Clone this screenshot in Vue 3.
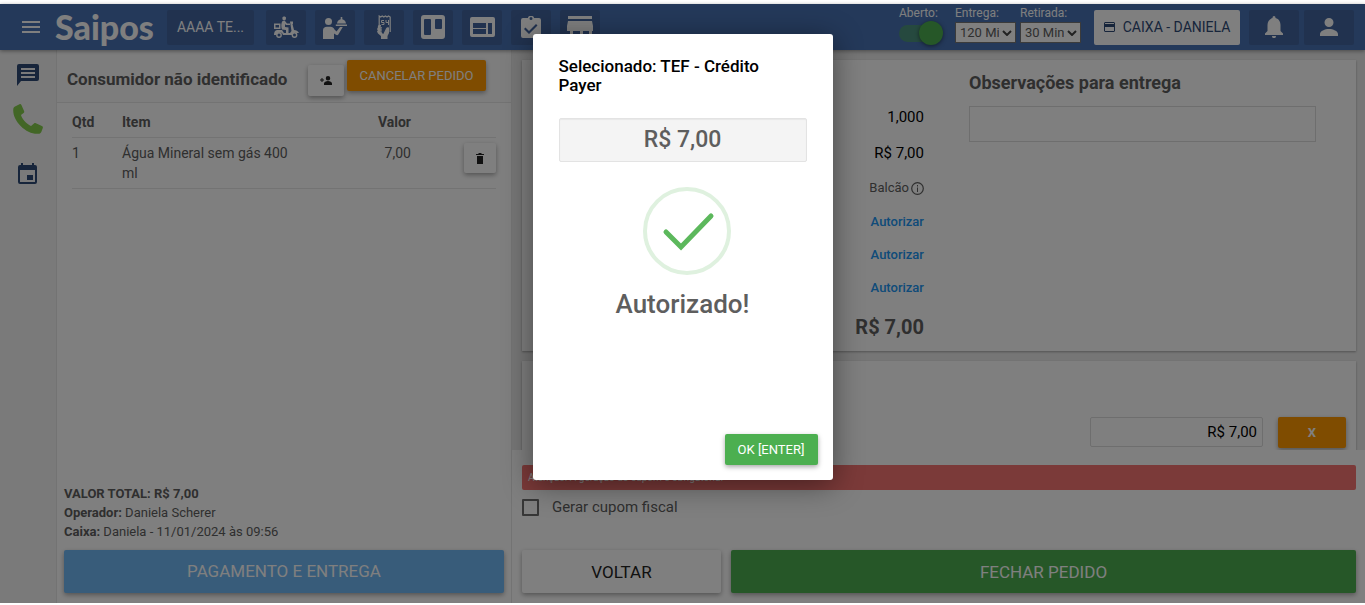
<script setup>
import { ref } from 'vue'

const entrega = ref('120 Min')
const retirada = ref('30 Min')
const aberto = ref(true)
const cupom = ref(false)
const observacoes = ref('')
const valorPago = ref('R$ 7,00')
const autorizacoes = ['Desconto', 'Acréscimo', 'Taxa de serviço']
</script>

<template>
  <div class="page">
    <header class="topbar">
      <button class="plain menu" aria-label="Menu">
        <svg width="18" height="12" viewBox="0 0 18 12"><path fill="currentColor" d="M0 0h18v2H0zM0 5h18v2H0zM0 10h18v2H0z" /></svg>
      </button>
      <span class="logo">Saipos</span>
      <button class="nav store">AAAA TE...</button>
      <nav class="shortcuts">
        <button class="nav" aria-label="Entregas">
          <svg width="25" height="22" viewBox="0 0 25 22">
            <g fill="currentColor">
              <path d="M8.500 1.500C9 0 12 0 12 2c0 2-1 2.500-2 2.500S8 3.500 8.500 1.500z" />
              <path fill-rule="evenodd" d="M0 7.500h6.500V13H0zM1.500 9v2.500H5V9z" />
              <path d="M8.500 5H11l2 2.500h3V9h-4l-1-1v3l3.500.5V17H12v-3l-4-.5C7 11 7 7 8.500 5z" />
              <path d="M16 5.500h3V8h-.5l1.500 6c2 0 4 1 5 3h-2.500l-1-.5-3 2.500H9l-1-2-2.500-1L2 19H0c0-3 1-4.500 3-5h5l2 3h6l1.500-2z" />
            </g>
            <g fill="#42659f" stroke="currentColor" stroke-width="1.400"><circle cx="5" cy="19" r="2.200" /><circle cx="20.500" cy="19" r="2.200" /></g>
          </svg>
        </button>
        <button class="nav" aria-label="Garçom">
          <svg width="24" height="23" viewBox="0 0 24 23">
            <g fill="currentColor"><circle cx="5.500" cy="5.500" r="3.500" /><path d="M0 23v-8.500C0 12 1.500 10.800 4 10.800h3.500c2 0 3 1 4 2.700l2 2L17 11h2.800l-4.500 7.500c-.6.800-1.500.9-2.300.3L11 17.500V23zM12.800 8.500H24v1.600H12.800zM14 7.500C14.300 4.700 16 3.500 17.700 3.200V1h1.600v2.200C21 3.500 22.700 4.700 23 7.500z" /></g>
          </svg>
        </button>
        <button class="nav" aria-label="Senhas">
          <svg width="15" height="24" viewBox="0 0 15 24">
            <path d="M2.200 11V1l1.500 1 1.500-1 1.600 1 1.600-1L10 2l1.500-1L13.200 2v15" fill="none" stroke="currentColor" stroke-width="1.200" />
            <path d="M1 10.500l3-.8v1.800l-1.500.7L4.800 12v1.500l-2 .5 2 .2v1.500l-2 .3 2 .4V18l1.500 1L9 13.500c.7-1.300 2-1.500 3-.8V18l-1.500 3v3H4v-3L1 18.500l-1-2 .8-1-.8-1.500.8-1.200z" fill="currentColor" />
            <path d="M7 5.500H4.500v2H7v2H4.500M9 5v2.500h2.500M11.500 5v5" fill="none" stroke="currentColor" />
          </svg>
        </button>
        <button class="nav" aria-label="Quadro">
          <svg width="24" height="24" viewBox="0 0 24 24"><path fill="currentColor" fill-rule="evenodd" d="M3 0h18a3 3 0 0 1 3 3v18a3 3 0 0 1-3 3H3a3 3 0 0 1-3-3V3a3 3 0 0 1 3-3zm1 4a1 1 0 0 0-1 1v14a1 1 0 0 0 1 1h5a1 1 0 0 0 1-1V5a1 1 0 0 0-1-1zm11 0a1 1 0 0 0-1 1v8a1 1 0 0 0 1 1h5a1 1 0 0 0 1-1V5a1 1 0 0 0-1-1z" /></svg>
        </button>
        <button class="nav" aria-label="Salão">
          <svg width="25" height="20" viewBox="0 0 25 20"><path fill="currentColor" fill-rule="evenodd" d="M2 0h21a2 2 0 0 1 2 2v16a2 2 0 0 1-2 2H2a2 2 0 0 1-2-2V2a2 2 0 0 1 2-2zm1 6v5h13V6zm0 6v5h13v-5zM18 6v11h4V6z" /></svg>
        </button>
        <button class="nav" aria-label="Pedidos">
          <svg width="20" height="22" viewBox="0 0 20 22"><path fill="currentColor" fill-rule="evenodd" d="M2 2h5c0-3 6-3 6 0h5a2 2 0 0 1 2 2v16a2 2 0 0 1-2 2H2a2 2 0 0 1-2-2V4a2 2 0 0 1 2-2zm8-1a1 1 0 0 0 0 3 1 1 0 0 0 0-3zM4.500 11.500L3 13l5 5 8.500-8.500L15 8l-7 7z" /></svg>
        </button>
        <button class="nav" aria-label="Loja">
          <svg width="26" height="23" viewBox="0 0 26 23"><path fill="currentColor" fill-rule="evenodd" d="M1 0h24v3H1zM1 5h24l1 5v5h-1v8h-3v-8h-6v8H3v-8H0v-5zm5 10v5h7v-5z" /></svg>
        </button>
      </nav>

      <div class="status">
        <label class="field toggle">
          <span>Aberto:</span>
          <input v-model="aberto" type="checkbox" role="switch" />
        </label>
        <label class="field">
          <span>Entrega:</span>
          <span class="pick">
            <select v-model="entrega"><option>120 Min</option></select>
            <svg width="10" height="6" viewBox="0 0 10 6"><path d="M1 1l4 4 4-4" fill="none" stroke="currentColor" stroke-width="2" /></svg>
          </span>
        </label>
        <label class="field">
          <span>Retirada:</span>
          <span class="pick">
            <select v-model="retirada"><option>30 Min</option></select>
            <svg width="10" height="6" viewBox="0 0 10 6"><path d="M1 1l4 4 4-4" fill="none" stroke="currentColor" stroke-width="2" /></svg>
          </span>
        </label>
      </div>
      <button class="cashier">
        <svg width="11" height="10" viewBox="0 0 11 10"><path fill="currentColor" fill-rule="evenodd" d="M1 0h9l1 1v8l-1 1H1L0 9V1zm0 1v1h9V1zm0 4v4h9V5z" /></svg>
        CAIXA - DANIELA
      </button>
      <button class="nav wide" aria-label="Notificações">
        <svg width="18" height="22" viewBox="0 0 18 22"><path fill="currentColor" d="M7 20h4c0 3-4 3-4 0zM9 0c1 0 1.500.7 1.500 2C14 3 15.500 6 15.500 9v6l2.500 2.500V19H0v-1.500L2.500 15V9c0-3 1.500-6 5-7C7.500.7 8 0 9 0z" /></svg>
      </button>
      <button class="nav wide" aria-label="Conta">
        <svg width="18" height="18" viewBox="0 0 18 18"><path fill="currentColor" d="M9 0a4.500 4.500 0 0 1 0 9 4.500 4.500 0 0 1 0-9zm0 11c4 0 9 2 9 5v2H0v-2c0-3 5-5 9-5z" /></svg>
      </button>
    </header>

    <div class="body">
      <aside class="side">
        <button class="plain" aria-label="Mensagens">
          <svg width="22" height="22" viewBox="0 0 22 22"><path fill="#2e4a76" fill-rule="evenodd" d="M2 0h18a2 2 0 0 1 2 2v13a2 2 0 0 1-2 2H4l-4 5V2a2 2 0 0 1 2-2zm2 4v2h14V4zm0 4v2h14V8zm0 4v2h14v-2z" /></svg>
        </button>
        <button class="plain" aria-label="Telefone">
          <svg width="30" height="30" viewBox="0 0 30 30"><path fill="#84cc4c" d="M2 2.500L6.500.2c.8-.4 1.500-.1 1.900.7l2.700 6c.3.800.2 1.400-.5 2L8 11c1 4 5 8.500 10 11l3-2.500c.6-.5 1.200-.6 1.900-.2l6 2.800c.9.4 1.200 1 .9 1.900l-1.500 4c-.3.900-1 1.500-2 1.700C14 31.500-1 17 .3 5c.1-1.200.7-2 1.700-2.500z" /></svg>
        </button>
        <button class="plain" aria-label="Agenda">
          <svg width="20" height="21" viewBox="0 0 20 21"><path fill="#2e4a76" fill-rule="evenodd" d="M3 0h2v2h9V0h2v2h1a2 2 0 0 1 2 2v15a2 2 0 0 1-2 2H2a2 2 0 0 1-2-2V4a2 2 0 0 1 2-2h1zM2 7v12h15V7zm7 5h6v5H9z" /></svg>
        </button>
      </aside>

      <section class="order">
        <div class="customer">
          <h2>Consumidor não identificado</h2>
          <button class="btn white add" aria-label="Adicionar consumidor">
            <svg width="12" height="9" viewBox="0 0 12 9"><path fill="currentColor" d="M8 0a2.200 2.200 0 0 1 0 4.500A2.200 2.200 0 0 1 8 0zm0 5c2 0 4 1.200 4 2.500V9H4V7.500C4 6.200 6 5 8 5zM1.500 2h1v1.500H4v1H2.500V6h-1V4.500H0v-1h1.500z" /></svg>
          </button>
          <button class="btn orange cancel">CANCELAR PEDIDO</button>
        </div>
        <table class="items">
          <thead>
            <tr><th class="qty">Qtd</th><th>Item</th><th class="value">Valor</th><th class="act"></th></tr>
          </thead>
          <tbody>
            <tr>
              <td>1</td>
              <td>Água Mineral sem gás 400 ml</td>
              <td class="value">7,00</td>
              <td class="act">
                <button class="btn white trash" aria-label="Excluir item">
                  <svg width="8" height="11" viewBox="0 0 8 11"><path fill="currentColor" d="M2.500 0h3v1H8v1H0V1h2.500zM1 3h6v8H1z" /></svg>
                </button>
              </td>
            </tr>
          </tbody>
        </table>
        <div class="summary">
          <p><b>VALOR TOTAL: R$ 7,00</b></p>
          <p><b>Operador:</b> Daniela Scherer</p>
          <p><b>Caixa:</b> Daniela - 11/01/2024 às 09:56</p>
          <button class="btn big blue">PAGAMENTO E ENTREGA</button>
        </div>
      </section>

      <main class="checkout">
        <div class="scroll">
          <div class="card details">
            <div class="values">
              <span class="num">1,000</span>
              <span class="num">R$ 7,00</span>
              <span class="origin">Balcão
                <svg width="13" height="13" viewBox="0 0 13 13"><circle cx="6.500" cy="6.500" r="5.800" fill="none" stroke="currentColor" stroke-width="1.200" /><path fill="currentColor" d="M6 3h1v1.500H6zM6 5.500h1V10H6z" /></svg>
              </span>
              <a v-for="nome in autorizacoes" :key="nome" href="#">Autorizar</a>
              <strong>R$ 7,00</strong>
            </div>
            <div class="notes">
              <label for="obs">Observações para entrega</label>
              <input id="obs" v-model="observacoes" type="text" />
            </div>
          </div>
          <div class="card payment">
            <input v-model="valorPago" type="text" aria-label="Valor pago" />
            <button class="btn orange remove">X</button>
          </div>
        </div>
        <div class="finish">
          <p class="alert">Atenção: A geração do cupom é obrigatória.</p>
          <label class="coupon"><input v-model="cupom" type="checkbox" />Gerar cupom fiscal</label>
          <div class="actions">
            <button class="btn big white back">VOLTAR</button>
            <button class="btn big green">FECHAR PEDIDO</button>
          </div>
        </div>
      </main>
    </div>

    <div class="overlay">
      <div class="modal" role="dialog" aria-modal="true">
        <h3>Selecionado: TEF - Crédito Payer</h3>
        <div class="amount">R$ 7,00</div>
        <svg class="done" width="88" height="88" viewBox="0 0 88 88">
          <circle cx="44" cy="44" r="42" fill="none" stroke="#dff1df" stroke-width="4" />
          <path d="M23 45l15 15 30-31" fill="none" stroke="#5cb85c" stroke-width="5" stroke-linecap="round" />
        </svg>
        <h4>Autorizado!</h4>
        <button class="btn green ok">OK [ENTER]</button>
      </div>
    </div>
  </div>
</template>

<style>
body {
  background: #fff;
}
</style>

<style scoped>
* {
  box-sizing: border-box;
}
.page {
  position: relative;
  display: flex;
  flex-direction: column;
  min-height: 100vh;
  padding: 4px 0 2px;
  font-family: Roboto, "Liberation Sans", sans-serif;
  font-size: 14px;
  color: #5e5e5e;
}
button,
input,
select {
  font: inherit;
  margin: 0;
}
button {
  border: 0;
  padding: 0;
  cursor: pointer;
}
svg {
  display: block;
  flex: none;
}
h2, h3, h4, p {
  margin: 0;
}
.plain {
  background: none;
}

/* top bar */
.topbar {
  position: relative;
  z-index: 1;
  display: flex;
  align-items: center;
  height: 46px;
  padding: 0 11px 0 22px;
  background: #4872b4;
  color: #fff;
  box-shadow: 0 1px 4px rgba(0, 0, 0, 0.4);
}
.menu {
  color: #fff;
}
.logo {
  width: 99px;
  margin: 0 13px 0 15px;
  font: 900 34px/40px Lato, sans-serif;
  color: #fff;
}
.nav {
  display: flex;
  align-items: center;
  justify-content: center;
  flex: none;
  width: 40px;
  height: 35px;
  border-radius: 2px;
  background: #42659f;
  color: #fff;
}
.store {
  width: 87px;
  margin-right: 12px;
}
.shortcuts {
  display: flex;
  gap: 9px;
}
.wide {
  width: 50px;
  margin-left: 5px;
}
.status {
  display: flex;
  gap: 4px;
  height: 44px;
  margin-left: auto;
}
.field {
  display: flex;
  flex-direction: column;
  width: 61px;
  font-size: 12px;
  line-height: 16px;
}
.toggle {
  width: 52px;
}
.toggle input {
  appearance: none;
  position: relative;
  width: 40px;
  height: 17px;
  margin-top: 4px;
  border-radius: 9px;
  background: #4c937e;
}
.toggle input::after {
  content: "";
  position: absolute;
  top: -4px;
  right: -4px;
  width: 24px;
  height: 24px;
  border-radius: 50%;
  background: #4caf50;
  box-shadow: 0 1px 4px rgba(0, 0, 0, 0.5);
}
.pick {
  position: relative;
  display: block;
  margin-top: 1px;
}
.pick select {
  appearance: none;
  display: block;
  width: 100%;
  height: 21px;
  padding: 0 16px 0 4px;
  border: 1px solid #767676;
  border-radius: 0;
  background: #fff;
  color: #5e5e5e;
  font-size: 13px;
}
.pick svg {
  position: absolute;
  right: 4px;
  top: 8px;
  color: #444;
  pointer-events: none;
}
.cashier {
  display: flex;
  align-items: center;
  justify-content: center;
  gap: 8px;
  width: 146px;
  height: 35px;
  margin: 0 4px 0 13px;
  border-radius: 2px;
  background: #fff;
  color: #2e4a76;
}

/* columns */
.body {
  display: grid;
  grid-template-columns: 57px 8fr 15fr;
  flex: 1;
}
.side {
  display: flex;
  flex-direction: column;
  align-items: center;
  padding-top: 14px;
  padding-right: 1px;
  border-right: 1px solid #e6e6e6;
  background: #f5f5f5;
}
.side .plain:nth-child(2) {
  margin: 18px 0 29px;
}
.order {
  display: flex;
  flex-direction: column;
  border-right: 1px solid #e6e6e6;
  background: #fff;
}
.customer {
  display: flex;
  height: 53px;
  padding: 10px 10px 0;
  border-bottom: 1px solid #e6e6e6;
  background: #fbfbfb;
}
.customer h2 {
  width: 241px;
  font-size: 17px;
  line-height: 39px;
  font-weight: 700;
  white-space: nowrap;
}
.btn {
  display: flex;
  align-items: center;
  justify-content: center;
  height: 31px;
  border-radius: 2px;
  box-shadow: 0 2px 5px rgba(0, 0, 0, 0.35);
  font-size: 13px;
}
.white {
  background: #fff;
  color: #222;
}
.orange {
  background: #ff9800;
  color: #fff;
}
.green {
  background: #4caf50;
  color: #fff;
}
.blue {
  background: #70b8f4;
  color: #fff;
}
.big {
  width: 100%;
  height: 43px;
  font-size: 17px;
}
.add {
  width: 36px;
  margin: 5px 3px 0 0;
}
.cancel {
  width: 139px;
}
.items {
  margin: 0 15px;
  border-collapse: collapse;
  table-layout: fixed;
  line-height: 20px;
}
.items th,
.items td {
  padding: 5px 0;
  border-bottom: 1px solid #e6e6e6;
  text-align: left;
  vertical-align: top;
}
.items th {
  padding: 9px 0 5px;
}
.items .qty {
  width: 50px;
}
.items .value {
  width: 110px;
  text-align: right;
}
.items .act {
  width: 85px;
}
.trash {
  width: 32px;
  height: 30px;
  margin-left: auto;
}
.summary {
  margin-top: auto;
  padding: 0 7px 10px;
  font-size: 13px;
  line-height: 19px;
}
.summary .btn {
  margin-top: 9px;
}

/* checkout */
.checkout {
  display: flex;
  flex-direction: column;
  background: #fff;
}
.scroll {
  height: 400px;
  padding: 10px 9px 0 10px;
  overflow: hidden;
  background: #ececec;
}
.card {
  display: flex;
  background: #fff;
  box-shadow: 0 1px 2px rgba(0, 0, 0, 0.3);
}
.details {
  display: grid;
  grid-template-columns: 1fr 1fr;
  height: 291px;
  padding-top: 10px;
}
.values {
  display: flex;
  flex-direction: column;
  align-items: flex-end;
  padding: 29px 15px 0 0;
  font-size: 13px;
  line-height: 33px;
}
.values .num {
  font-size: 15px;
  line-height: 36px;
  color: #000;
}
.origin {
  display: flex;
  align-items: center;
  gap: 2px;
  line-height: 34px;
}
.values a {
  color: #2196f3;
  font-weight: 500;
  text-decoration: none;
}
.values strong {
  font-size: 20px;
  line-height: 46px;
}
.notes {
  padding: 0 40px 0 30px;
}
.notes label {
  display: block;
  margin-bottom: 10px;
  font-size: 18px;
  line-height: 26px;
  font-weight: 700;
}
.notes input {
  width: 100%;
  height: 36px;
  border: 1px solid #dcdcdc;
  background: transparent;
}
.payment {
  justify-content: flex-end;
  gap: 15px;
  height: 94px;
  margin-top: 10px;
  padding: 56px 10px 0 0;
}
.payment input {
  width: 173px;
  height: 30px;
  padding: 0 5px;
  border: 1px solid #dcdcdc;
  border-radius: 2px;
  background: #fff;
  font-size: 15px;
  text-align: right;
  color: #000;
}
.remove {
  width: 68px;
  font-weight: 700;
}
.finish {
  display: flex;
  flex-direction: column;
  flex: 1;
  padding: 15px 9px 10px 10px;
}
.alert {
  padding: 0 6px;
  border-radius: 2px;
  background: #f67572;
  color: #fff;
  font-size: 10px;
  line-height: 25px;
}
.coupon {
  display: flex;
  align-items: center;
  gap: 13px;
  margin-top: 7px;
  font-size: 15px;
  line-height: 20px;
}
.coupon input {
  appearance: none;
  width: 17px;
  height: 17px;
  border: 2px solid #6e6e6e;
  border-radius: 1px;
}
.actions {
  display: flex;
  gap: 10px;
  margin-top: auto;
}
.back {
  flex: none;
  width: 199px;
}

/* dialog */
.overlay {
  position: absolute;
  inset: 4px 0 2px;
  z-index: 2;
  padding-top: 30px;
  background: rgba(0, 0, 0, 0.5);
}
.modal {
  display: flex;
  flex-direction: column;
  width: 300px;
  height: 446px;
  margin: 0 auto;
  padding: 23px 15px 15px 26px;
  border-radius: 3px;
  background: #fff;
  box-shadow: 0 5px 30px rgba(0, 0, 0, 0.45);
}
.modal h3 {
  padding-right: 26px;
  font-size: 17px;
  line-height: 19px;
  font-weight: 500;
  color: #000;
}
.amount {
  margin: 23px 11px 25px 0;
  border: 1px solid #e3e3e3;
  border-radius: 2px;
  background: #f4f4f4;
  box-shadow: inset 0 1px 1px rgba(0, 0, 0, 0.05);
  font-size: 23px;
  line-height: 42px;
  font-weight: 500;
  text-align: center;
}
.done {
  margin-left: 84px;
}
.modal h4 {
  margin: 12px 11px 0 0;
  font-size: 26px;
  line-height: 34px;
  font-weight: 500;
  text-align: center;
}
.ok {
  align-self: flex-end;
  width: 93px;
  margin-top: auto;
}
</style>
